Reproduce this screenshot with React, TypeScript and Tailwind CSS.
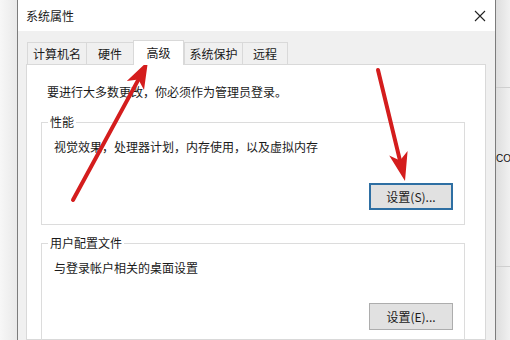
import React from "react";

const font = { fontFamily: '"Noto Sans CJK SC", "Noto Sans", sans-serif' };

function Tab({ label, w, active }: { label: string; w: string; active?: boolean }) {
  if (active) {
    return (
      <div
        className={`${w} h-[25px] -mb-px bg-white border border-b-0 border-[#d9d9d9] flex items-start justify-center pt-[3px] text-[12px] text-[#1a1a1a] z-10 shrink-0`}
      >
        {label}
      </div>
    );
  }
  return (
    <div
      className={`${w} h-[22px] bg-[#f0f0f0] border border-b-0 border-r-0 last:border-r border-[#d9d9d9] flex items-center justify-center text-[12px] text-[#1a1a1a] shrink-0`}
    >
      {label}
    </div>
  );
}

function GroupBox({
  title,
  text,
  button,
  focused,
  className,
  gap,
}: {
  title: string;
  text: string;
  button: string;
  focused?: boolean;
  className?: string;
  gap: string;
}) {
  return (
    <div className={`relative shrink-0 border border-[#dcdcdc] ml-[14px] w-[424px] ${className ?? ""}`}>
      <div className="absolute -top-[9px] left-[6px] bg-white px-[2px] text-[12px] leading-[16px] text-[#1a1a1a]">
        {title}
      </div>
      <div className="pl-[12px] pt-[16px] text-[12px] leading-[16px] text-[#1a1a1a]">{text}</div>
      <div className={`flex justify-end pr-[11px] ${gap}`}>
        <div
          className={`w-[84px] h-[27px] flex items-center justify-center text-[12px] text-[#1a1a1a] bg-[#e1e1e1] ${
            focused ? "border-2 border-[#2e6fa3]" : "border border-[#adadad]"
          }`}
        >
          {button}
        </div>
      </div>
    </div>
  );
}

export default function App() {
  return (
    <div className="relative w-[510px] h-[340px] overflow-hidden bg-[#f6f6f6] flex" style={font}>
      {/* left background strip */}
      <div className="w-[17px] h-full shrink-0 bg-gradient-to-r from-[#f7f7f7] to-[#e9e9e9]" />

      {/* dialog */}
      <div className="w-[479px] h-full shrink-0 flex flex-col overflow-hidden border-l border-r border-[#7c7c7c] bg-[#f0f0f0]">
        {/* title bar */}
        <div className="h-[31px] shrink-0 bg-white flex items-center justify-between pl-[8px] pr-[9px]">
          <span className="text-[12px] text-[#1a1a1a]">系统属性</span>
          <svg width="12" height="12" viewBox="0 0 12 12">
            <path d="M1 1 L11 11 M11 1 L1 11" stroke="#222" strokeWidth="1.1" fill="none" />
          </svg>
        </div>

        {/* body */}
        <div className="flex-1 min-h-0 flex flex-col pl-[8px] pr-[9px] pt-[9px]">
          <div className="flex items-end pl-px shrink-0">
            <Tab label="计算机名" w="w-[59px]" />
            <Tab label="硬件" w="w-[47px]" />
            <Tab label="高级" w="w-[51px]" active />
            <Tab label="系统保护" w="w-[58px]" />
            <Tab label="远程" w="w-[46px]" />
          </div>
          <div className="flex-1 min-h-0 bg-white border border-[#d9d9d9] flex flex-col">
            <div className="shrink-0 pl-[20px] pt-[19px] text-[12px] leading-[16px] text-[#1a1a1a]">
              要进行大多数更改，你必须作为管理员登录。
            </div>
            <GroupBox
              className="mt-[22px] h-[103px]"
              gap="pt-[28px]"
              title="性能"
              text="视觉效果，处理器计划，内存使用，以及虚拟内存"
              button="设置(S)..."
              focused
            />
            <GroupBox
              className="mt-[18px] h-[110px]"
              gap="pt-[27px]"
              title="用户配置文件"
              text="与登录帐户相关的桌面设置"
              button="设置(E)..."
            />
          </div>
        </div>
      </div>

      {/* right background strip */}
      <div className="flex-1 h-full flex flex-col bg-gradient-to-r from-[#dedede] to-[#f2f2f2]">
        <div className="h-[88px] shrink-0 border-b border-[#cfcfcf]" />
        <div className="h-[64px] shrink-0" />
        <div
          className="shrink-0 text-[10px] leading-[13px] text-[#111] whitespace-nowrap"
          style={{ fontFamily: '"Liberation Sans", sans-serif' }}
        >
          CO
        </div>
        <div className="h-[102px] shrink-0 border-b border-[#cfcfcf]" />
      </div>

      {/* annotation arrows */}
      <svg className="absolute inset-0 pointer-events-none" width="510" height="340" viewBox="0 0 510 340">
        <line x1="73" y1="200" x2="138.4" y2="79.6" stroke="#d41d1d" strokeWidth="4" strokeLinecap="round" />
        <polygon points="148,61 144,90 138.4,79.6 126.8,81" fill="#d41d1d" />
        <line x1="378" y1="70" x2="400" y2="160.6" stroke="#d41d1d" strokeWidth="4" strokeLinecap="round" />
        <polygon points="405,181 389.2,155.4 400,160.6 407.6,151" fill="#d41d1d" />
      </svg>
    </div>
  );
}
